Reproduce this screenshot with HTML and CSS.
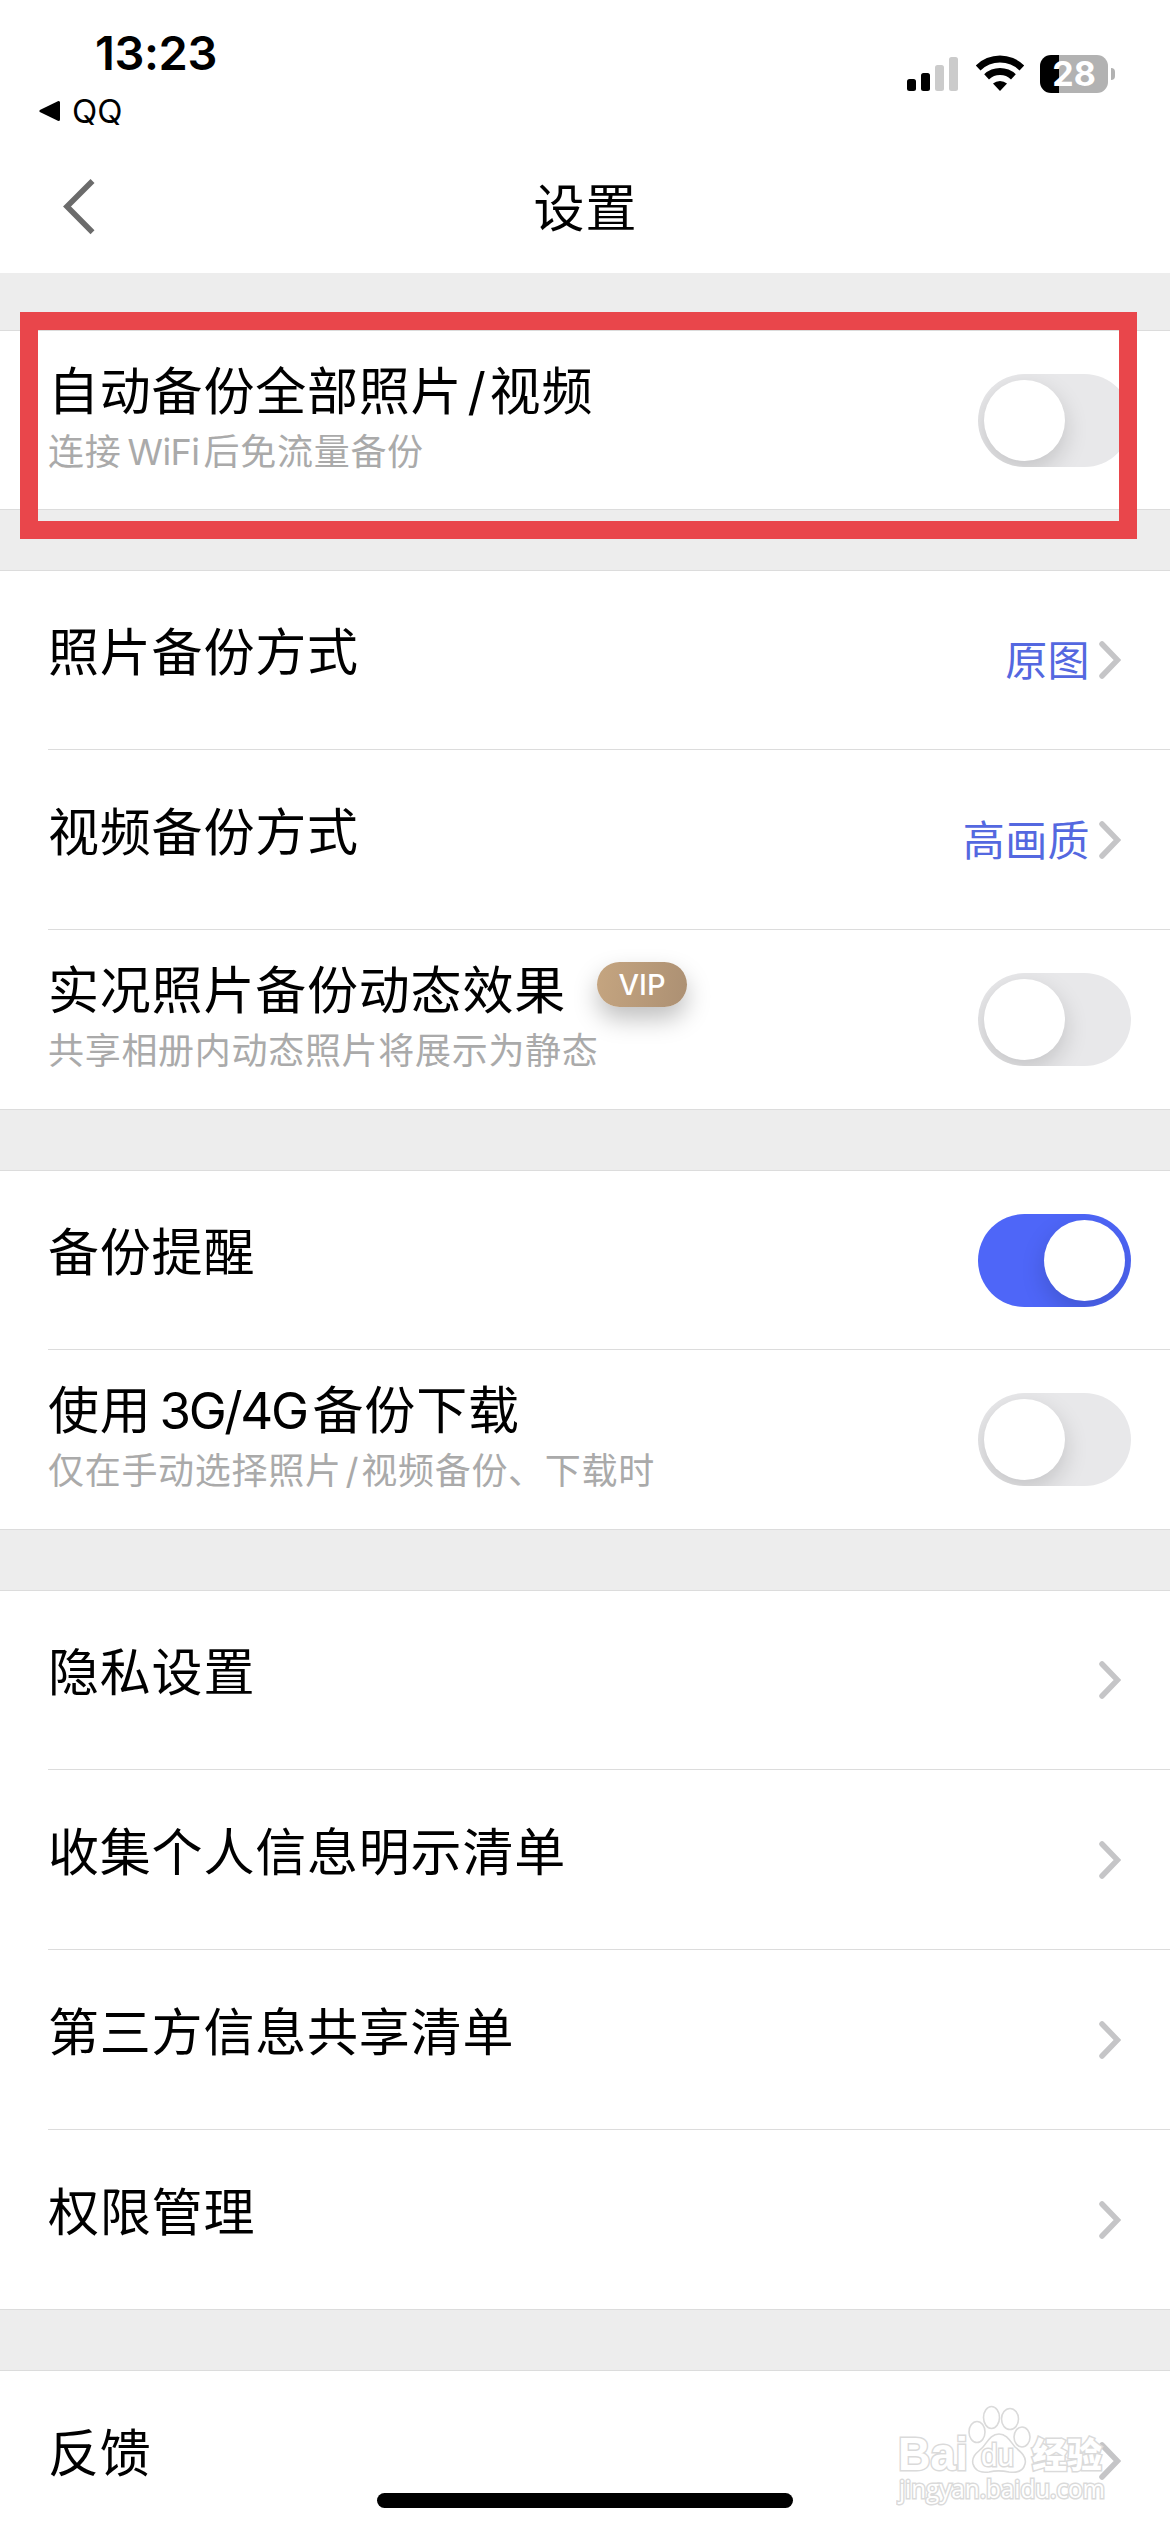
FILE: index.html
```
<!DOCTYPE html>
<html lang="zh-CN">

<head>
    <meta charset="UTF-8">
    <meta name="viewport" content="width=device-width, initial-scale=1.0">
    <title>设置</title>
    <link rel="stylesheet" href="styles.css">
</head>

<body>
    <div class="status-bar">
        <div class="status-left">
            <div class="time">13:23</div>
            <div class="back-app">
                <svg width="22" height="22" viewBox="0 0 22 22">
                    <path d="M2 11 L19.5 2.5 V19.5 Z" stroke="#000" stroke-width="3" stroke-linejoin="round" />
                </svg>
                <span>QQ</span>
            </div>
        </div>
        <div class="status-icons">
            <svg class="signal" width="51" height="34" viewBox="0 0 51 34">
                <rect x="0" y="22" width="9" height="12" rx="2.5" />
                <rect x="14" y="16" width="9" height="18" rx="2.5" />
                <rect x="28" y="8" width="9" height="26" rx="2.5" fill="#cbcbcb" />
                <rect x="42" y="0" width="9" height="34" rx="2.5" fill="#cbcbcb" />
            </svg>
            <svg class="wifi" width="50" height="36" viewBox="0 0 50 36">
                <path d="M.8 10.4 A34.5 34.5 0 0 1 49.2 10.4 L44.5 15.6 A27.5 27.5 0 0 0 5.5 15.6 Z" />
                <path d="M9.2 19.3 A22.8 22.8 0 0 1 40.8 19.3 L36 24.4 A15.8 15.8 0 0 0 14 24.4 Z" />
                <path d="M18 28.6 A10.5 10.5 0 0 1 32 28.6 L25 36 Z" />
            </svg>
            <div class="battery"><span>28</span></div>
            <div class="battery-tip"></div>
        </div>
    </div>

    <div class="nav">
        <svg class="nav-back" width="34" height="56" viewBox="0 0 34 56">
            <path d="M30.5 2 L5 27.6 L30.5 53.2" fill="none" stroke="#6b6b6b" stroke-width="5.6" />
        </svg>
        <h1>设置</h1>
    </div>

    <div class="group">
        <div class="row">
            <div class="text">
                <div class="title">自动备份全部照片<span class="slash">/</span>视频</div>
                <div class="sub">连接<span class="wifi-word">WiFi</span>后免流量备份</div>
            </div>
            <div class="switch"></div>
            <div class="highlight"></div>
        </div>
    </div>

    <div class="group">
        <div class="row">
            <div class="title">照片备份方式</div>
            <div class="value">原图</div>
            <svg class="arrow" viewBox="0 0 22 38"><path d="M3 3 L18.5 19 L3 35" /></svg>
        </div>
        <div class="row">
            <div class="title">视频备份方式</div>
            <div class="value">高画质</div>
            <svg class="arrow" viewBox="0 0 22 38"><path d="M3 3 L18.5 19 L3 35" /></svg>
        </div>
        <div class="row">
            <div class="text">
                <div class="title">实况照片备份动态效果<span class="vip">VIP</span></div>
                <div class="sub">共享相册内动态照片将展示为静态</div>
            </div>
            <div class="switch"></div>
        </div>
    </div>

    <div class="group">
        <div class="row">
            <div class="title">备份提醒</div>
            <div class="switch on"></div>
        </div>
        <div class="row">
            <div class="text">
                <div class="title">使用<span class="net">3G/4G</span>备份下载</div>
                <div class="sub">仅在手动选择照片<span class="slash">/</span>视频备份、下载时</div>
            </div>
            <div class="switch"></div>
        </div>
    </div>

    <div class="group">
        <div class="row">
            <div class="title">隐私设置</div>
            <svg class="arrow" viewBox="0 0 22 38"><path d="M3 3 L18.5 19 L3 35" /></svg>
        </div>
        <div class="row">
            <div class="title">收集个人信息明示清单</div>
            <svg class="arrow" viewBox="0 0 22 38"><path d="M3 3 L18.5 19 L3 35" /></svg>
        </div>
        <div class="row">
            <div class="title">第三方信息共享清单</div>
            <svg class="arrow" viewBox="0 0 22 38"><path d="M3 3 L18.5 19 L3 35" /></svg>
        </div>
        <div class="row">
            <div class="title">权限管理</div>
            <svg class="arrow" viewBox="0 0 22 38"><path d="M3 3 L18.5 19 L3 35" /></svg>
        </div>
    </div>

    <div class="group last">
        <div class="row">
            <div class="title">反馈</div>
            <svg class="arrow" viewBox="0 0 22 38"><path d="M3 3 L18.5 19 L3 35" /></svg>
        </div>
    </div>

    <svg class="watermark" width="220" height="110" viewBox="0 0 220 110">
        <text class="wm-logo" x="2" y="70" textLength="70" lengthAdjust="spacingAndGlyphs">Bai</text>
        <ellipse cx="81" cy="32" rx="8" ry="10.5" />
        <ellipse cx="95.5" cy="17.5" rx="8" ry="11" />
        <ellipse cx="114" cy="19" rx="8.5" ry="10.5" />
        <ellipse cx="126" cy="37" rx="8" ry="10" />
        <path d="M103 34 C111 34 114 41 119 47 C125 52 131 57 129 64 C127 72 120 73 113 72 C106 70.5 99 70.5 93 72 C86 73 79 71 77 64 C75 56 82 52 87 47 C92 41 95 34 103 34 Z" />
        <text class="wm-du" x="85" y="66" textLength="33" lengthAdjust="spacingAndGlyphs">du</text>
        <text class="wm-cn" x="136" y="68" textLength="70" lengthAdjust="spacingAndGlyphs">经验</text>
        <text class="wm-url" x="3" y="98" textLength="206" lengthAdjust="spacingAndGlyphs">jingyan.baidu.com</text>
    </svg>

    <div class="home-bar"></div>
</body>

</html>
```
FILE: styles.css
```
* {
    box-sizing: border-box;
}

body {
    margin: 0;
    width: 1170px;
    height: 2532px;
    overflow: hidden;
    position: relative;
    background: #ededed;
    color: #000;
    font-family: Inter, "Noto Sans CJK SC", sans-serif;
}

svg {
    display: block;
}

/* status bar */
.status-bar {
    display: flex;
    justify-content: space-between;
    height: 141px;
    padding: 25px 55px 0 39px;
    background: #fff;
}

.time {
    margin-left: 56px;
    height: 56px;
    line-height: 56px;
    font-size: 47px;
    font-weight: 600;
    letter-spacing: -0.4px;
}

.back-app {
    display: flex;
    align-items: center;
    gap: 11px;
    height: 40px;
    margin-top: 10px;
    font-size: 33px;
    line-height: 40px;
}

.status-icons {
    display: flex;
    align-items: center;
    height: 38px;
    margin-top: 30px;
}

.signal {
    margin-right: 17px;
}

.wifi {
    margin-right: 15px;
    margin-top: -2px;
}

.battery {
    width: 68px;
    height: 38px;
    border-radius: 11px;
    background: linear-gradient(to right, #000 19px, #b2b2b2 19px);
    color: #fff;
    font-size: 34px;
    font-weight: 700;
    line-height: 38px;
    text-align: center;
}

.battery-tip {
    width: 4px;
    height: 12px;
    margin-left: 3px;
    border-radius: 0 6px 6px 0;
    background: #b2b2b2;
}

/* nav */
.nav {
    display: flex;
    align-items: center;
    height: 132px;
    padding: 0 62px;
    background: #fff;
}

.nav h1 {
    flex: 1;
    margin: 3px 33px 0 0;
    font-size: 51px;
    font-weight: 400;
    line-height: 72px;
    letter-spacing: 1px;
    text-align: center;
}

/* groups */
.group {
    position: relative;
    margin-top: 60px;
    border-top: 1px solid #dcdcdc;
    background: #fff;
}

.nav + .group {
    margin-top: 57px;
}

.row {
    display: flex;
    align-items: center;
    height: 180px;
    margin-left: 48px;
    padding-right: 39px;
    border-bottom: 1px solid #dcdcdc;
}

.row:first-child {
    height: 179px;
}

.row:last-child {
    margin-left: 0;
    padding-left: 48px;
}

.last .row {
    border: 0;
}

.title {
    flex: 1;
    font-size: 51px;
    line-height: 60px;
    letter-spacing: 0.8px;
    white-space: nowrap;
}

.row > .title {
    padding-bottom: 14px;
}

.text {
    flex: 1;
    padding-top: 3px;
}

.sub {
    font-size: 36px;
    line-height: 60px;
    letter-spacing: 0.7px;
    color: #aaa;
    white-space: nowrap;
}

.slash {
    margin: 0 3px 0 5px;
}

.sub .slash {
    margin: 0 2px 0 4px;
}

.wifi-word {
    margin: 0 4px 0 6px;
    letter-spacing: -0.5px;
}

.net {
    margin: 0 6px 0 8px;
    letter-spacing: -2.4px;
}

.value {
    margin-right: 9px;
    padding-bottom: 5px;
    color: #5468e0;
    font-size: 42px;
    letter-spacing: 0.4px;
}

.arrow {
    width: 22px;
    height: 38px;
    margin-right: 10px;
    fill: none;
    stroke: #c5c5c7;
    stroke-width: 5.5;
    stroke-linecap: round;
}

.vip {
    display: inline-block;
    width: 90px;
    height: 45px;
    margin-left: 31px;
    border-radius: 23px;
    background: linear-gradient(100deg, #c5a580, #ac9073);
    box-shadow: 0 12px 24px rgba(0, 0, 0, 0.25);
    color: #fff;
    font-size: 29px;
    font-weight: 500;
    line-height: 45px;
    letter-spacing: 0;
    text-align: center;
    vertical-align: 14px;
    margin-top: -14px;
}

.switch {
    width: 153px;
    height: 93px;
    padding: 6px;
    border-radius: 47px;
    background: #e8e8ea;
    overflow: hidden;
}

.switch::before {
    content: "";
    display: block;
    width: 81px;
    height: 81px;
    border-radius: 50%;
    background: #fff;
    box-shadow: 0 9px 24px rgba(0, 0, 0, 0.16);
}

.switch.on {
    background: #4e66f8;
}

.switch.on::before {
    margin-left: auto;
}

/* red frame around the first option */
.highlight {
    position: absolute;
    left: 20px;
    top: -19px;
    width: 1117px;
    height: 227px;
    border: 18px solid #e9464b;
    z-index: 1;
}

.watermark {
    position: absolute;
    left: 896px;
    top: 2400px;
    fill: #fff;
    stroke: #dadada;
    stroke-width: 1.6;
}

.watermark text {
    paint-order: stroke;
    stroke-width: 3;
}

.wm-logo {
    font: 700 47px "Liberation Sans", sans-serif;
}

.wm-du {
    font: 400 31px "Liberation Sans", sans-serif;
}

.wm-cn {
    font: 900 35px "Noto Sans CJK SC", sans-serif;
}

.wm-url {
    font: 400 25px "Open Sans", sans-serif;
}

.home-bar {
    position: absolute;
    left: 377px;
    bottom: 24px;
    width: 416px;
    height: 15px;
    border-radius: 8px;
    background: #000;
}
```
